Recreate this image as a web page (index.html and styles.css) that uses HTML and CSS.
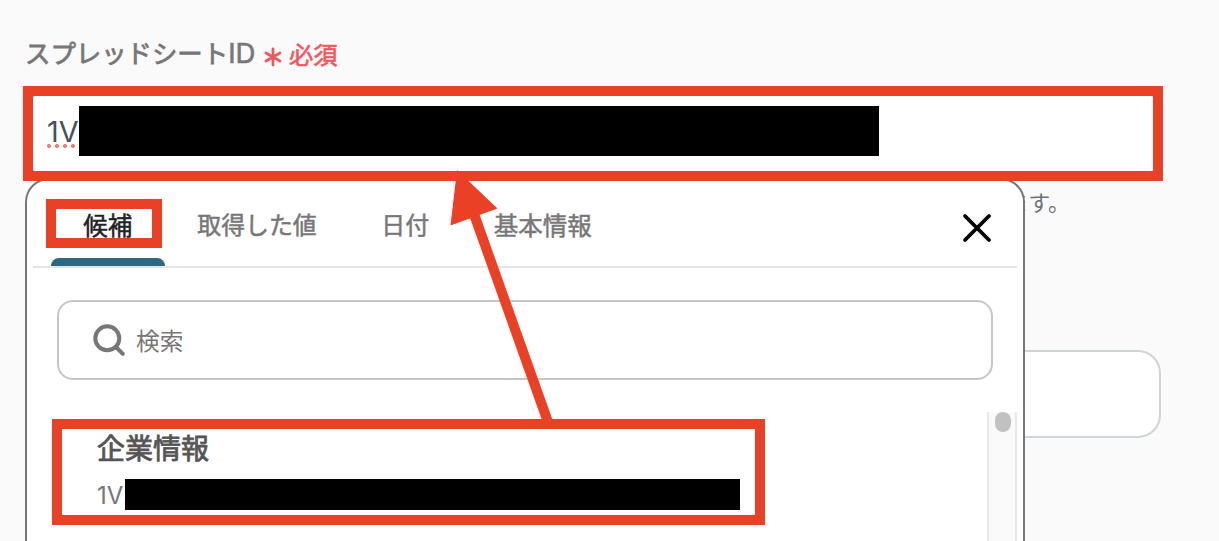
FILE: index.html
```html
<!DOCTYPE html>
<html lang="ja">
<head>
<meta charset="utf-8">
<title>スプレッドシートID</title>
<link rel="stylesheet" href="styles.css">
</head>
<body>
<main class="form">
  <div class="label"><span class="label-name">スプレッドシート<span class="latin">ID</span></span>
    <svg class="asterisk" width="18" height="20" viewBox="0 0 18 20"><path d="M9 2v16M2 6l14 8M16 6l-14 8"/></svg>
    <span class="required">必須</span></div>
  <div class="field field-focus"><span class="value">1V</span><span class="mask mask-field"></span></div>
  <p class="help">ます。</p>
  <div class="field field-next"></div>
</main>

<section class="popup">
  <nav class="tabs">
    <span class="tab tab-active">候補</span>
    <span class="tab">取得した値</span>
    <span class="tab">日付</span>
    <span class="tab">基本情報</span>
    <svg class="close" width="30" height="30" viewBox="0 0 30 30"><path d="M3 3l24 24M27 3L3 27"/></svg>
  </nav>
  <div class="search">
    <svg class="search-icon" width="34" height="34" viewBox="0 0 34 34"><circle cx="15.3" cy="15.3" r="12"/><path d="M24 24l6.800 6.800"/></svg>
    <span class="placeholder">検索</span>
  </div>
  <div class="results">
    <div class="item">
      <div class="item-title">企業情報</div>
      <div class="item-sub"><span class="item-value">1V</span><span class="mask mask-item"></span></div>
    </div>
    <div class="scrollbar"><div class="thumb"></div></div>
  </div>
</section>

<div class="mark mark-field"></div>
<div class="mark mark-tab"></div>
<div class="mark mark-result"></div>
<svg class="arrow" width="1219" height="541" viewBox="0 0 1219 541"><path class="shaft" d="M474 214L548 422"/><path class="head" d="M457 170L497.500 208.500L450.500 225.500Z"/></svg>
</body>
</html>
```
FILE: styles.css
```css
* { box-sizing: border-box; }
body {
  margin: 0;
  width: 1219px;
  height: 541px;
  position: relative;
  overflow: hidden;
  background: #fafafa;
  font-family: Inter, "Noto Sans CJK JP", sans-serif;
}
svg { display: block; fill: none; flex: none; }
.form { padding: 29px 57px 0 24px; display: flex; flex-direction: column; }
.label { height: 44px; display: flex; align-items: center; color: #777; }
.label-name { font-size: 25.4px; width: 232px; margin-left: 1px; margin-top: 1px; white-space: nowrap; -webkit-text-stroke: .8px #777; }
.latin { font-size: 27.5px; -webkit-text-stroke-width: .6px; }
.asterisk { margin: 11px 6px 0 7px; stroke: #ee5861; stroke-width: 2.8; stroke-linecap: round; }
.required { color: #ee5861; font-size: 24.3px; margin-top: 4px; margin-left: 1px; -webkit-text-stroke: .6px #ee5861; }
.field { background: #fff; }
.field-focus {
  height: 93px;
  margin: 14px -1px 0 0;
  border: 9px solid #86b7fe;
  border-radius: 12px;
  display: flex;
  align-items: flex-start;
  padding: 10px 0 0 14px;
}
.value {
  width: 32px;
  height: 42px;
  padding-top: 8px;
  font-size: 28.8px;
  line-height: 36px;
  color: #495057;
  background: radial-gradient(circle at 2px 2px, #f27d78 1.7px, transparent 2.3px) 0 100% / 8px 4px repeat-x;
}
.mask { background: #000; }
.mask-field { width: 800px; height: 50px; }
.help { margin: 5px 92px 0 0; height: 36px; line-height: 36px; font-size: 22px; text-align: right; color: #6c757d; }
.field-next { height: 88px; margin: 129px 1px 0 2px; border: 2px solid #ced4da; border-radius: 23px; }

.popup {
  position: absolute;
  left: 25px;
  top: 178px;
  width: 1000px;
  height: 363px;
  border: 2px solid #777;
  border-bottom: 0;
  border-radius: 24px 24px 0 0;
  background: #fff;
  overflow: hidden;
}
.tabs { display: flex; height: 88px; margin: 0 6px; padding-left: 18px; border-bottom: 2px solid #e5e5e5; }
.tab { padding: 0 32.3px; font-size: 23.9px; line-height: 92px; color: #777; -webkit-text-stroke: .5px #777; }
.tab:nth-child(4) { font-size: 24.5px; }
.tab-active {
  color: #222;
  -webkit-text-stroke-color: #222;
  width: 114px;
  display: flex;
  flex-direction: column;
  height: 86px;
  font-size: 24.5px;
}
.tab-active::after { content: ""; height: 8px; margin: -14px -32.3px 0; border-radius: 8px 8px 0 0; background: #2d6781; flex: none; }
.close { margin: 33px 25px 0 auto; stroke: #000; stroke-width: 3.8; stroke-linecap: round; }
.search {
  display: flex;
  align-items: center;
  height: 80px;
  margin: 32px 30px 0;
  padding-left: 33px;
  border: 2px solid #c6c6c6;
  border-radius: 16px;
  color: #777;
  font-size: 23.7px;
}
.search-icon { margin-right: 10px; stroke: #777; stroke-width: 4; stroke-linecap: round; }
.placeholder { margin-bottom: 1px; }
.results { display: flex; justify-content: space-between; margin: 32px 6px 0 70px; height: 129px; }
.item-title { height: 40px; margin-top: 17px; line-height: 40px; font-size: 28px; color: #555; -webkit-text-stroke: .8px #555; }
.item-sub { display: flex; align-items: flex-start; margin-top: 10px; height: 31px; line-height: 33px; color: #777; font-size: 24px; }
.item-value { width: 28px; }
.mask-item { width: 615px; height: 31px; }
.scrollbar { width: 30px; border: solid #e8e8e8; border-width: 0 2px; background: #fafafa; }
.thumb { width: 16px; height: 20px; margin-left: 6px; border-radius: 8px; background: #c1c1c1; }

.mark { position: absolute; border: 10px solid #ea4026; }
.mark-field { left: 23px; top: 86px; width: 1140px; height: 95px; }
.mark-tab { left: 46px; top: 199px; width: 116px; height: 49px; }
.mark-result { left: 52px; top: 419px; width: 713px; height: 106px; }
.arrow { position: absolute; left: 0; top: 0; }
.shaft { stroke: #ea4026; stroke-width: 10; }
.head { fill: #ea4026; }
```
